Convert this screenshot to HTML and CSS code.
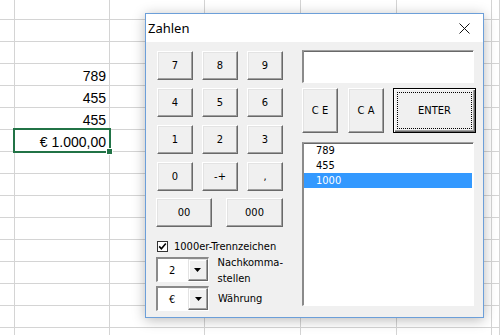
FILE: index.html
```html
<!DOCTYPE html>
<html lang="de">
<head>
<meta charset="utf-8">
<title>Zahlen</title>
<link rel="stylesheet" href="styles.css">
</head>
<body>
<div class="sheet">
  <div class="c"></div><div class="c"></div><div class="c"></div><div class="c"></div><div class="c"></div><div class="c"></div><div class="c"></div>
  <div class="c"></div><div class="c"></div><div class="c"></div><div class="c"></div><div class="c"></div><div class="c"></div><div class="c"></div>
  <div class="c"></div><div class="c"></div><div class="c"></div><div class="c"></div><div class="c"></div><div class="c"></div><div class="c"></div>
  <div class="c"></div><div class="c v">789</div><div class="c"></div><div class="c"></div><div class="c"></div><div class="c"></div><div class="c"></div>
  <div class="c"></div><div class="c v">455</div><div class="c"></div><div class="c"></div><div class="c"></div><div class="c"></div><div class="c"></div>
  <div class="c"></div><div class="c v">455</div><div class="c"></div><div class="c"></div><div class="c"></div><div class="c"></div><div class="c"></div>
  <div class="c"></div><div class="c v sel">€ 1.000,00<span class="handle"></span></div><div class="c"></div><div class="c"></div><div class="c"></div><div class="c"></div><div class="c"></div>
  <div class="c"></div><div class="c"></div><div class="c"></div><div class="c"></div><div class="c"></div><div class="c"></div><div class="c"></div>
  <div class="c"></div><div class="c"></div><div class="c"></div><div class="c"></div><div class="c"></div><div class="c"></div><div class="c"></div>
  <div class="c"></div><div class="c"></div><div class="c"></div><div class="c"></div><div class="c"></div><div class="c"></div><div class="c"></div>
  <div class="c"></div><div class="c"></div><div class="c"></div><div class="c"></div><div class="c"></div><div class="c"></div><div class="c"></div>
  <div class="c"></div><div class="c"></div><div class="c"></div><div class="c"></div><div class="c"></div><div class="c"></div><div class="c"></div>
  <div class="c"></div><div class="c"></div><div class="c"></div><div class="c"></div><div class="c"></div><div class="c"></div><div class="c"></div>
  <div class="c"></div><div class="c"></div><div class="c"></div><div class="c"></div><div class="c"></div><div class="c"></div><div class="c"></div>
  <div class="c"></div><div class="c"></div><div class="c"></div><div class="c"></div><div class="c"></div><div class="c"></div><div class="c"></div>
  <div class="c"></div><div class="c"></div><div class="c"></div><div class="c"></div><div class="c"></div><div class="c"></div><div class="c"></div>
</div>

<div class="dialog">
  <div class="titlebar">
    <span class="title">Zahlen</span>
    <svg class="close" width="11" height="11" viewBox="0 0 11 11"><path d="M0.5 0.5 L10.5 10.5 M10.5 0.5 L0.5 10.5" stroke="#111" stroke-width="1" fill="none"/></svg>
  </div>
  <div class="dbody">
    <div class="left">
      <div class="keypad">
        <button class="btn">7</button><button class="btn">8</button><button class="btn">9</button>
        <button class="btn">4</button><button class="btn">5</button><button class="btn">6</button>
        <button class="btn">1</button><button class="btn">2</button><button class="btn">3</button>
        <button class="btn">0</button><button class="btn">-+</button><button class="btn">,</button>
      </div>
      <div class="zeros">
        <button class="btn z1">00</button>
        <button class="btn z2">000</button>
      </div>
      <div class="check">
        <span class="box"><svg width="9" height="9" viewBox="0 0 9 9"><polyline points="1.2,4.4 3.4,6.8 7.8,1.6" fill="none" stroke="#000" stroke-width="1.6"/></svg></span>
        <span>1000er-Trennzeichen</span>
      </div>
      <div class="crow">
        <div class="combo"><span class="cval">2</span><span class="drop"><svg width="7" height="4" viewBox="0 0 7 4"><polygon points="0,0 7,0 3.5,4" fill="#000"/></svg></span></div>
        <div class="clabel two">Nachkomma-<br>stellen</div>
      </div>
      <div class="crow">
        <div class="combo"><span class="cval">€</span><span class="drop"><svg width="7" height="4" viewBox="0 0 7 4"><polygon points="0,0 7,0 3.5,4" fill="#000"/></svg></span></div>
        <div class="clabel">Währung</div>
      </div>
    </div>
    <div class="right">
      <div class="tf sunken"></div>
      <div class="brow">
        <button class="btn ce">C E</button>
        <button class="btn ca">C A</button>
        <button class="btn enter">ENTER</button>
      </div>
      <div class="list sunken">
        <div class="item">789</div>
        <div class="item">455</div>
        <div class="item on">1000</div>
      </div>
    </div>
  </div>
</div>
</body>
</html>
```

FILE: styles.css
```css
html, body {
  margin: 0;
  padding: 0;
}
body {
  width: 500px;
  height: 335px;
  overflow: hidden;
  position: relative;
  background: #fff;
  font-family: "Liberation Sans", Arial, sans-serif;
}

/* spreadsheet */
.sheet {
  display: grid;
  grid-template-columns: 15px 95px 95px 96px 96px 95px 1fr;
  grid-template-rows: 20px;
  grid-auto-rows: 22px;
}
.c {
  box-sizing: border-box;
  border-right: 1px solid #d4d4d4;
  border-bottom: 1px solid #d4d4d4;
}
.v {
  display: flex;
  justify-content: flex-end;
  align-items: flex-end;
  padding: 0 3px 1px 0;
  font-size: 14px;
  line-height: 16px;
  color: #000;
}
.sel {
  position: relative;
}
.sel::after {
  content: "";
  position: absolute;
  left: -2px;
  top: -2px;
  right: -2px;
  bottom: -2px;
  border: 2px solid #217346;
}
.handle {
  position: absolute;
  right: -4px;
  bottom: -4px;
  width: 5px;
  height: 5px;
  background: #217346;
  border: 1px solid #fff;
  z-index: 1;
}

/* dialog */
.dialog {
  position: absolute;
  left: 145px;
  top: 13px;
  width: 339px;
  height: 305px;
  box-sizing: border-box;
  border: 1px solid #6c9fd9;
  background: #f0f0f0;
  box-shadow: 0 2px 12px rgba(0, 0, 0, 0.28);
  font-family: "DejaVu Sans Condensed", "DejaVu Sans", sans-serif;
  font-stretch: condensed;
  font-size: 11px;
  color: #000;
}
.titlebar {
  height: 28px;
  background: #fff;
  display: flex;
  align-items: center;
  justify-content: space-between;
  padding: 0 13px 0 2px;
}
.title {
  font-family: "Noto Sans", "Open Sans", sans-serif;
  font-stretch: normal;
  font-size: 13px;
  color: #000;
}
.close {
  display: block;
}
.dbody {
  display: flex;
  padding: 8px 0 0 10px;
  gap: 19px;
}
.left {
  width: 127px;
  display: flex;
  flex-direction: column;
}
.keypad {
  display: grid;
  grid-template-columns: repeat(3, 36px);
  grid-auto-rows: 29px;
  column-gap: 9px;
  row-gap: 8px;
  margin: 1px 0 0 1px;
}
.btn {
  box-sizing: border-box;
  margin: 0;
  padding: 0;
  border: 1px solid;
  border-color: #fff #696969 #696969 #fff;
  box-shadow: inset -1px -1px 0 #a0a0a0, inset 1px 1px 0 #e3e3e3;
  background: #f0f0f0;
  display: flex;
  align-items: center;
  justify-content: center;
  font: inherit;
  font-stretch: inherit;
  color: #000;
}
.zeros {
  display: flex;
  justify-content: space-between;
  margin-top: 7px;
  height: 29px;
}
.z1 { width: 56px; }
.z2 { width: 57px; }
.check {
  display: flex;
  align-items: center;
  gap: 6px;
  height: 14px;
  margin-top: 12px;
  margin-left: 1px;
}
.box {
  width: 11px;
  height: 11px;
  box-sizing: border-box;
  border: 1px solid #333;
  background: #fff;
  display: flex;
  align-items: center;
  justify-content: center;
}
.box svg { display: block; }
.crow {
  display: flex;
  align-items: center;
  gap: 9px;
  height: 25px;
  margin-top: 4px;
}
.combo {
  width: 53px;
  height: 25px;
  box-sizing: border-box;
  border-style: solid;
  border-width: 2px 1px 1px 2px;
  border-color: #8a8a8a #fff #fff #8a8a8a;
  background: #fff;
  display: flex;
}
.cval {
  flex: 1;
  padding-left: 11px;
  display: flex;
  align-items: center;
}
.drop {
  width: 20px;
  box-sizing: border-box;
  border: 1px solid;
  border-color: #e3e3e3 #696969 #696969 #e3e3e3;
  box-shadow: inset -1px -1px 0 #a0a0a0, inset 1px 1px 0 #fff;
  background: #f0f0f0;
  display: flex;
  align-items: center;
  justify-content: center;
}
.drop svg { display: block; }
.clabel {
  line-height: 16px;
}
.clabel.two {
  margin-top: 3px;
}

.right {
  width: 174px;
  display: flex;
  flex-direction: column;
}
.sunken {
  box-sizing: border-box;
  border-style: solid;
  border-width: 1px 1px 1px 2px;
  border-color: #a0a0a0 #fff #fff #8a8a8a;
  box-shadow: inset 0 1px 0 #696969;
  background: #fff;
}
.tf {
  width: 172px;
  height: 33px;
}
.brow {
  display: flex;
  margin-top: 5px;
  height: 45px;
}
.ce { width: 36px; }
.ca { width: 36px; margin-left: 10px; }
.enter {
  width: 83px;
  margin-left: 9px;
  border: 1px solid #000;
  box-shadow: inset 1px 1px 0 #fff, inset -1px -1px 0 #696969, inset -2px -2px 0 #a0a0a0;
  outline: 1px dotted #000;
  outline-offset: -5px;
}
.list {
  width: 172px;
  height: 164px;
  margin-top: 9px;
}
.item {
  line-height: 15px;
  padding-left: 12px;
}
.item.on {
  background: #3399ff;
  color: #fff;
  margin-right: 1px;
}
```
